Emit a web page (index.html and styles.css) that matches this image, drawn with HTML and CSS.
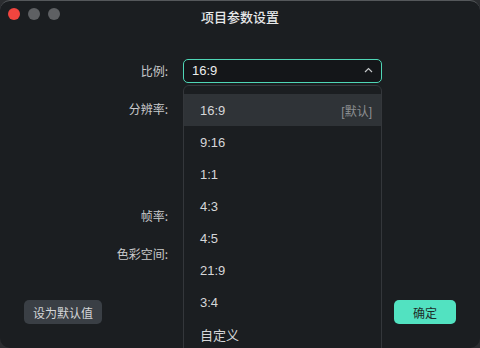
FILE: index.html
```html
<!DOCTYPE html>
<html lang="zh">
<head>
<meta charset="utf-8">
<link rel="stylesheet" href="styles.css">
</head>
<body>
<div class="window">
  <div class="titlebar">
    <div class="lights">
      <span class="light red"></span>
      <span class="light gray"></span>
      <span class="light gray"></span>
    </div>
    <div class="title">项目参数设置</div>
  </div>
  <div class="form">
    <div class="row">
      <div class="label">比例:</div>
      <div class="select">
        <span>16:9</span>
        <svg class="chev" width="9" height="6" viewBox="0 0 9 6"><path d="M1 5 L4.5 1.5 L8 5" fill="none" stroke="#c4c6c8" stroke-width="1.2"/></svg>
      </div>
    </div>
    <div class="row tall">
      <div class="label">分辨率:</div>
    </div>
    <div class="row">
      <div class="label">帧率:</div>
    </div>
    <div class="row">
      <div class="label">色彩空间:</div>
    </div>
  </div>
  <div class="footer">
    <button class="btn secondary">设为默认值</button>
    <button class="btn primary">确定</button>
  </div>
  <div class="dropdown">
    <div class="item active"><span>16:9</span><span class="tag">[默认]</span></div>
    <div class="item">9:16</div>
    <div class="item">1:1</div>
    <div class="item">4:3</div>
    <div class="item">4:5</div>
    <div class="item">21:9</div>
    <div class="item">3:4</div>
    <div class="item">自定义</div>
  </div>
</div>
</body>
</html>
```
FILE: styles.css
```css
html, body {
  margin: 0;
  padding: 0;
}
body {
  width: 480px;
  height: 348px;
  background: #2b2d30;
  overflow: hidden;
  font-family: "Liberation Sans", "Noto Sans CJK SC", sans-serif;
}
.window {
  position: relative;
  box-sizing: border-box;
  width: 480px;
  height: 348px;
  background: #1b1e21;
  border-radius: 10px;
  border-top: 1px solid #55585b;
  display: flex;
  flex-direction: column;
  overflow: hidden;
}
.titlebar {
  position: relative;
  height: 31px;
  display: flex;
  align-items: center;
  justify-content: center;
}
.lights {
  position: absolute;
  left: 8px;
  top: 7px;
  display: flex;
  gap: 8px;
}
.light {
  width: 12px;
  height: 12px;
  border-radius: 50%;
}
.light.red { background: #f1453f; }
.light.gray { background: #5e6063; }
.title {
  color: #e8e9ea;
  font-size: 13px;
  font-family: "Noto Sans CJK SC", sans-serif;
  font-weight: 500;
  margin-top: -1px;
}
.form {
  padding-top: 27px;
  display: flex;
  flex-direction: column;
  gap: 15px;
}
.row {
  display: flex;
  align-items: center;
  gap: 15px;
  height: 23px;
}
.row.tall {
  height: 92px;
  align-items: flex-start;
}
.row.tall .label {
  line-height: 23px;
}
.label {
  width: 168px;
  text-align: right;
  color: #c9cacc;
  font-size: 12px;
  font-family: "Noto Sans CJK SC", sans-serif;
}
.select {
  box-sizing: border-box;
  width: 199px;
  height: 24px;
  border: 1px solid #4fd6b6;
  border-radius: 5px;
  background: #141619;
  display: flex;
  align-items: center;
  justify-content: space-between;
  padding: 0 8px 0 8px;
  color: #eceded;
  font-size: 13px;
}
.chev {
  margin-top: -1px;
}
.footer {
  margin-top: auto;
  display: flex;
  justify-content: space-between;
  padding: 0 24px 24px 24px;
}
.btn {
  height: 24px;
  border: none;
  border-radius: 5px;
  font-size: 12px;
  font-family: "Noto Sans CJK SC", sans-serif;
  padding: 0;
}
.btn.secondary {
  width: 78px;
  background: #3a3f45;
  color: #d4d6d8;
}
.btn.primary {
  width: 62px;
  background: #52e2c1;
  color: #1f2d2a;
}
.dropdown {
  position: absolute;
  left: 183px;
  top: 84px;
  width: 199px;
  height: 300px;
  box-sizing: border-box;
  background: #1b1e21;
  border: 1px solid #34373b;
  border-radius: 6px 6px 0 0;
  padding-top: 8px;
}
.item {
  height: 32px;
  display: flex;
  align-items: center;
  justify-content: space-between;
  padding: 0 9px 0 16px;
  color: #d6d7d9;
  font-size: 13px;
}
.item.active {
  background: #2f3337;
}
.tag {
  color: #8c8f92;
  font-size: 12px;
}
```
